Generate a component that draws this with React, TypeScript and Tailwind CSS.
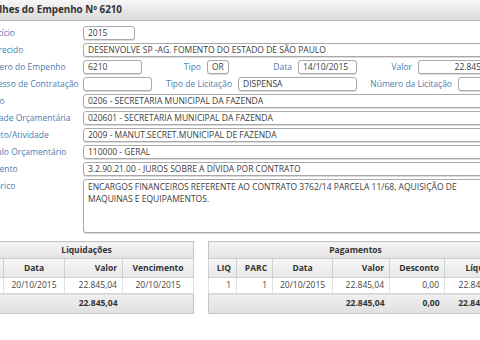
import React from 'react';

type FieldProps = { label: string; children: React.ReactNode };
type BoxProps = { w: string; value?: string; right?: boolean };

const Field = ({ label, children }: FieldProps) => (
  <div className="flex h-[14px] items-center">
    <span className="w-[103px] flex-none whitespace-nowrap text-[#4d7db3]">{label}</span>
    {children}
  </div>
);

const Box = ({ w, value, right }: BoxProps) => (
  <div
    className={`${w} h-[14px] flex-none overflow-hidden whitespace-nowrap rounded-[3px] border border-[#a9a9a9] bg-white px-[4px] leading-[12px] text-[#3c3c3c] shadow-[0_1px_0_#dcdcdc] ${right ? 'text-right' : ''}`}
  >
    {value}
  </div>
);

const InlineLabel = ({ w, text }: { w: string; text: string }) => (
  <span className={`${w} flex-none whitespace-nowrap pr-[6px] text-right text-[#4d7db3]`}>{text}</span>
);

const th = 'h-[19px] border border-[#cfcfcf] px-[5px] font-bold text-[#333]';
const td = 'h-[16px] border-x border-[#e0e0e0] px-[5px] text-[#444]';
const tf = 'h-[20px] px-[5px] font-bold text-[#333]';

const App = (): JSX.Element => {
  return (
    <div className="h-[340px] w-[480px] overflow-hidden bg-white font-['Open_Sans',sans-serif] text-[8.5px]">
      <div className="ml-[-28px] w-[560px]">
        <div className="flex h-[21px] items-center border-b border-[#b5b5b5] bg-linear-to-b from-[#f7f7f7] to-[#dadada] pl-[4px]">
          <span className="text-[9.8px] font-bold text-[#333]">Detalhes do Empenho Nº 6210</span>
        </div>

        <div className="flex flex-col gap-[3px] pl-[8px] pt-[5px]">
          <Field label="Exercício">
            <Box w="w-[52px]" value="2015" />
          </Field>
          <Field label="Favorecido">
            <Box w="w-[415px]" value="DESENVOLVE SP -AG. FOMENTO DO ESTADO DE SÃO PAULO" />
          </Field>
          <Field label="Número do Empenho">
            <Box w="w-[59px]" value="6210" />
            <InlineLabel w="w-[65px]" text="Tipo" />
            <Box w="w-[22px]" value="OR" />
            <InlineLabel w="w-[69px]" text="Data" />
            <Box w="w-[59px]" value="14/10/2015" />
            <InlineLabel w="w-[61px]" text="Valor" />
            <Box w="w-[80px]" value="22.845,04" right />
          </Field>
          <Field label="Processo de Contratação">
            <Box w="w-[69px]" />
            <InlineLabel w="w-[86px]" text="Tipo de Licitação" />
            <Box w="w-[119px]" value="DISPENSA" />
            <InlineLabel w="w-[101px]" text="Número da Licitação" />
            <Box w="w-[40px]" />
          </Field>
          <Field label="Órgão">
            <Box w="w-[415px]" value="0206 - SECRETARIA MUNICIPAL DA FAZENDA" />
          </Field>
          <Field label="Unidade Orçamentária">
            <Box w="w-[415px]" value="020601 - SECRETARIA MUNICIPAL DA FAZENDA" />
          </Field>
          <Field label="Projeto/Atividade">
            <Box w="w-[415px]" value="2009 - MANUT.SECRET.MUNICIPAL DE FAZENDA" />
          </Field>
          <Field label="Vínculo Orçamentário">
            <Box w="w-[415px]" value="110000 - GERAL" />
          </Field>
          <Field label="Elemento">
            <Box w="w-[415px]" value="3.2.90.21.00 - JUROS SOBRE A DÍVIDA POR CONTRATO" />
          </Field>
          <div className="flex">
            <span className="w-[103px] flex-none pt-[1px] text-[#4d7db3]">Histórico</span>
            <div className="h-[54px] w-[415px] flex-none rounded-[3px] border border-[#a9a9a9] bg-white px-[4px] pt-[1px] leading-[12px] text-[#3c3c3c] shadow-[0_1px_0_#dcdcdc]">
              ENCARGOS FINANCEIROS REFERENTE AO CONTRATO 3762/14 PARCELA 11/68, AQUISIÇÃO DE
              <br />
              MAQUINAS E EQUIPAMENTOS.
            </div>
          </div>
        </div>

        <div className="flex gap-[14px] pl-[7px] pt-[8px]">
          <table className="w-[214px] flex-none table-fixed border-collapse border border-[#c4c4c4]">
            <colgroup>
              <col className="w-[24px]" />
              <col className="w-[61px]" />
              <col className="w-[58px]" />
              <col className="w-[71px]" />
            </colgroup>
            <thead>
              <tr>
                <th colSpan={4} className="h-[17px] border-b border-[#cfcfcf] bg-linear-to-b from-[#f5f5f5] to-[#e2e2e2] font-bold text-[#333]">
                  Liquidações
                </th>
              </tr>
              <tr className="bg-linear-to-b from-[#f6f6f6] to-[#e8e8e8]">
                <th className={`${th} text-right`}>Nº</th>
                <th className={`${th} text-center`}>Data</th>
                <th className={`${th} text-right`}>Valor</th>
                <th className={`${th} text-center`}>Vencimento</th>
              </tr>
            </thead>
            <tbody>
              <tr className="bg-white">
                <td className={`${td} text-right`}>1</td>
                <td className={`${td} text-center`}>20/10/2015</td>
                <td className={`${td} text-right`}>22.845,04</td>
                <td className={`${td} text-center`}>20/10/2015</td>
              </tr>
            </tbody>
            <tfoot>
              <tr className="border-t border-[#d4d4d4] bg-linear-to-b from-[#eeeeee] to-[#e0e0e0]">
                <td className={tf}></td>
                <td className={tf}></td>
                <td className={`${tf} text-right`}>22.845,04</td>
                <td className={tf}></td>
              </tr>
            </tfoot>
          </table>

          <table className="w-[294px] flex-none table-fixed border-collapse border border-[#c4c4c4]">
            <colgroup>
              <col className="w-[28px]" />
              <col className="w-[36px]" />
              <col className="w-[60px]" />
              <col className="w-[57px]" />
              <col className="w-[55px]" />
              <col className="w-[58px]" />
            </colgroup>
            <thead>
              <tr>
                <th colSpan={6} className="h-[17px] border-b border-[#cfcfcf] bg-linear-to-b from-[#f5f5f5] to-[#e2e2e2] font-bold text-[#333]">
                  Pagamentos
                </th>
              </tr>
              <tr className="bg-linear-to-b from-[#f6f6f6] to-[#e8e8e8]">
                <th className={`${th} text-right`}>LIQ</th>
                <th className={`${th} text-right`}>PARC</th>
                <th className={`${th} text-center`}>Data</th>
                <th className={`${th} text-right`}>Valor</th>
                <th className={`${th} text-right`}>Desconto</th>
                <th className={`${th} text-right`}>Líquido</th>
              </tr>
            </thead>
            <tbody>
              <tr className="bg-white">
                <td className={`${td} text-right`}>1</td>
                <td className={`${td} text-right`}>1</td>
                <td className={`${td} text-center`}>20/10/2015</td>
                <td className={`${td} text-right`}>22.845,04</td>
                <td className={`${td} text-right`}>0,00</td>
                <td className={`${td} text-right`}>22.845,04</td>
              </tr>
            </tbody>
            <tfoot>
              <tr className="border-t border-[#d4d4d4] bg-linear-to-b from-[#eeeeee] to-[#e0e0e0]">
                <td className={tf}></td>
                <td className={tf}></td>
                <td className={tf}></td>
                <td className={`${tf} text-right`}>22.845,04</td>
                <td className={`${tf} text-right`}>0,00</td>
                <td className={`${tf} text-right`}>22.845,04</td>
              </tr>
            </tfoot>
          </table>
        </div>
      </div>
    </div>
  );
};

export default App;
